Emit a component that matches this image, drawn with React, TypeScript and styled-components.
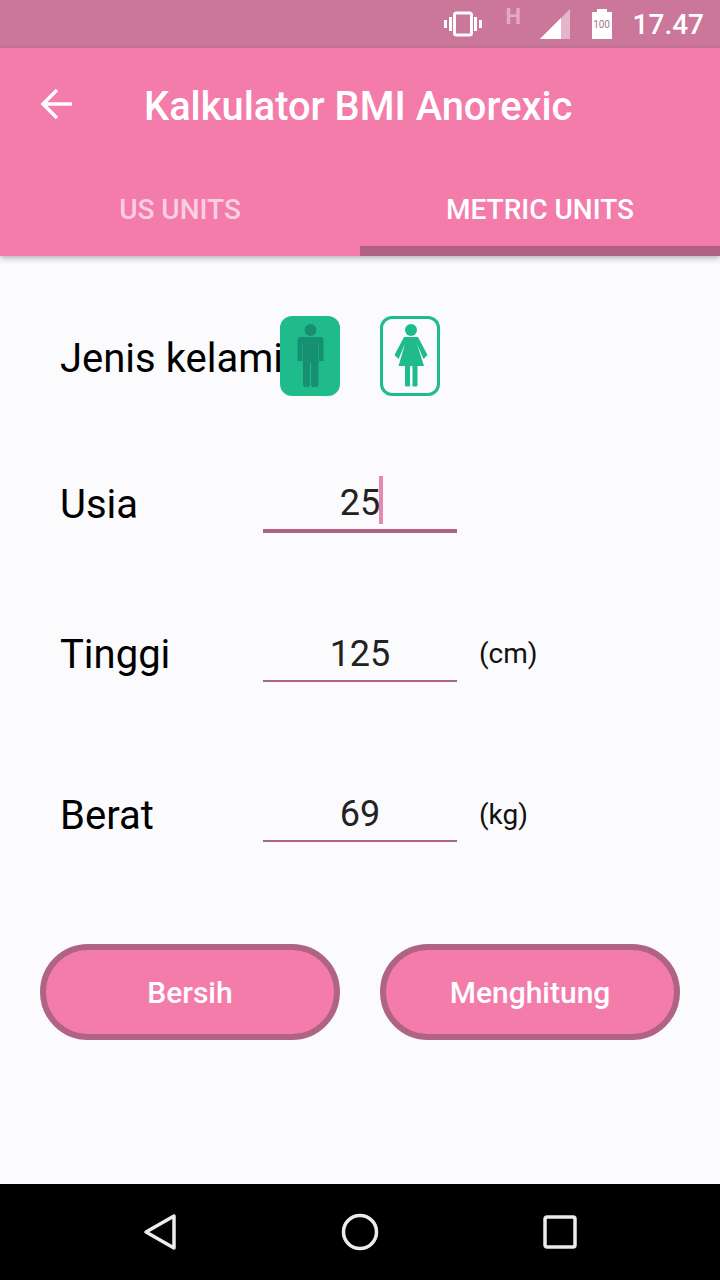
import styled, { createGlobalStyle } from 'styled-components';

const GlobalStyle = createGlobalStyle`
  html, body {
    margin: 0;
    padding: 0;
    background: #fbfafd;
  }
`;

const MaleIcon = () => (
  <svg width='60' height='80' viewBox='0 0 60 80'>
    <circle cx='30.500' cy='14' r='6' fill='#179071' />
    <path
      d='M20 21 H41 Q43.500 21 43.500 24 V45 H39 V28 H38.500 V69 Q38.500 71 36.500 71 H33 Q31 71 31 69 V47 H30 V69 Q30 71 28 71 H25 Q23 71 23 69 V28 H22.500 V45 H17.500 V24 Q17.500 21 20 21 Z'
      fill='#179071'
    />
  </svg>
);

const FemaleIcon = () => (
  <svg width='60' height='80' viewBox='0 0 60 80'>
    <circle cx='31' cy='14' r='6' fill='#1fbb8b' />
    <path
      d='M24 21 H38 L47.500 39 L43.500 43 L37 28 L44 50 H37.500 V69 Q37.500 70.500 36 70.500 H33.500 Q32.500 70.500 32.500 69 V50 H30 V69 Q30 70.500 28.500 70.500 H26.500 Q25 70.500 25 69 V50 H18.500 L25 28 L18.500 43 L14.500 39 Z'
      fill='#1fbb8b'
    />
  </svg>
);

export default function App() {
  return (
    <Screen>
      <GlobalStyle />
      <StatusBar>
        <svg width='38' height='26' viewBox='0 0 38 26'>
          <rect x='10.500' y='2' width='17' height='22' rx='2' fill='none' stroke='#fff' strokeWidth='3' />
          <rect x='0' y='9' width='3' height='8' fill='#fff' />
          <rect x='5' y='6' width='3' height='14' fill='#fff' />
          <rect x='30' y='6' width='3' height='14' fill='#fff' />
          <rect x='35' y='9' width='3' height='8' fill='#fff' />
        </svg>
        <NetworkMark>H</NetworkMark>
        <svg width='30' height='30' viewBox='0 0 30 30'>
          <path d='M0 30 L30 0 V30 Z' fill='#e6b5c9' />
          <path d='M0 30 L21 9 V30 Z' fill='#fff' />
        </svg>
        <Battery>
          <BatteryCap />
          <BatteryBody>100</BatteryBody>
        </Battery>
        <Clock>17.47</Clock>
      </StatusBar>

      <Header>
        <Toolbar>
          <svg width='34' height='34' viewBox='0 0 34 34'>
            <path d='M32 17 H4 M17 3 L3 17 L17 31' fill='none' stroke='#fff' strokeWidth='3.500' />
          </svg>
          <Title>Kalkulator BMI Anorexic</Title>
        </Toolbar>
        <Tabs>
          <Tab>US UNITS</Tab>
          <Tab $active>METRIC UNITS</Tab>
        </Tabs>
      </Header>

      <Content>
        <GenderRow>
          <Label>Jenis kelami</Label>
          <GenderButton $selected>
            <MaleIcon />
          </GenderButton>
          <GenderButton>
            <FemaleIcon />
          </GenderButton>
        </GenderRow>

        <FieldRow $top={57} $drop={2}>
          <FieldLabel>Usia</FieldLabel>
          <Field $focused>
            <FieldValue>
              25
              <Caret />
            </FieldValue>
          </Field>
        </FieldRow>

        <FieldRow $top={49} $drop={4}>
          <FieldLabel>Tinggi</FieldLabel>
          <Field>
            <FieldValue>125</FieldValue>
          </Field>
          <Unit>(cm)</Unit>
        </FieldRow>

        <FieldRow $top={60} $drop={6}>
          <FieldLabel>Berat</FieldLabel>
          <Field>
            <FieldValue>69</FieldValue>
          </Field>
          <Unit>(kg)</Unit>
        </FieldRow>

        <Buttons>
          <PillButton>Bersih</PillButton>
          <PillButton>Menghitung</PillButton>
        </Buttons>
      </Content>

      <NavBar>
        <svg width='34' height='38' viewBox='0 0 34 38'>
          <path d='M31 3 V35 L3 19 Z' fill='none' stroke='#ececec' strokeWidth='3.500' strokeLinejoin='round' />
        </svg>
        <svg width='38' height='38' viewBox='0 0 38 38'>
          <circle cx='19' cy='19' r='16.500' fill='none' stroke='#ececec' strokeWidth='3.500' />
        </svg>
        <svg width='34' height='34' viewBox='0 0 34 34'>
          <rect x='2' y='2' width='30' height='30' rx='2' fill='none' stroke='#ececec' strokeWidth='3.500' />
        </svg>
      </NavBar>
    </Screen>
  );
}

const Screen = styled.div`
  width: 720px;
  height: 1280px;
  display: flex;
  flex-direction: column;
  overflow: hidden;
  background: #fbfafd;
  font-family: Roboto, sans-serif;
`;

const StatusBar = styled.div`
  height: 48px;
  flex-shrink: 0;
  padding-right: 16px;
  box-sizing: border-box;
  display: flex;
  align-items: center;
  justify-content: flex-end;
  background: #cb7799;
`;

const NetworkMark = styled.div`
  width: 18px;
  margin: -16px 16px 0 24px;
  color: #e6a9c2;
  font-size: 22px;
  font-weight: 700;
`;

const Battery = styled.div`
  width: 20px;
  height: 30px;
  margin: 0 21px 0 22px;
  display: flex;
  flex-direction: column;
  align-items: center;
`;

const BatteryCap = styled.div`
  width: 10px;
  height: 3px;
  background: #fff;
`;

const BatteryBody = styled.div`
  width: 20px;
  height: 27px;
  background: #fff;
  color: #a8768c;
  font-size: 10px;
  line-height: 25px;
  text-align: center;
`;

const Clock = styled.div`
  color: #fff;
  font-size: 28px;
  font-weight: 500;
`;

const Header = styled.header`
  height: 208px;
  flex-shrink: 0;
  display: flex;
  flex-direction: column;
  background: #f37cab;
  box-shadow: 0 2px 6px rgba(0, 0, 0, 0.3);
  position: relative;
`;

const Toolbar = styled.div`
  height: 112px;
  padding-left: 40px;
  display: flex;
  align-items: center;
`;

const Title = styled.h1`
  margin: 0 0 0 70px;
  padding-top: 4px;
  color: #fff;
  font-size: 39.8px;
  font-weight: 500;
  white-space: nowrap;
`;

const Tabs = styled.div`
  flex: 1;
  display: flex;
`;

const Tab = styled.div<{ $active?: boolean }>`
  flex: 1;
  height: 96px;
  box-sizing: border-box;
  display: flex;
  align-items: flex-start;
  justify-content: center;
  border-bottom: 10px solid ${(p) => (p.$active ? '#b06080' : 'transparent')};
  color: ${(p) => (p.$active ? '#fff' : '#fbcfe0')};
  font-size: 28px;
  font-weight: 500;
  line-height: 100px;
`;

const Content = styled.main`
  flex: 1;
  display: flex;
  flex-direction: column;
  padding-top: 60px;
`;

const GenderRow = styled.div`
  height: 80px;
  padding-left: 60px;
  display: flex;
  align-items: center;
  gap: 40px;
  color: #000;
`;

const Label = styled.div`
  width: 220px;
  margin-right: -40px;
  padding-top: 4px;
  white-space: nowrap;
  font-size: 40px;
`;

const GenderButton = styled.div<{ $selected?: boolean }>`
  width: 60px;
  height: 80px;
  box-sizing: border-box;
  display: flex;
  align-items: center;
  justify-content: center;
  border-radius: 12px;
  border: 3px solid #1fbb8b;
  background: ${(p) => (p.$selected ? '#1fbb8b' : 'transparent')};
  flex-shrink: 0;
  & svg {
    flex-shrink: 0;
  }
`;

const FieldRow = styled.div<{ $top: number; $drop: number }>`
  height: 100px;
  margin-top: ${(p) => p.$top}px;
  padding-left: 60px;
  display: flex;
  align-items: center;
  --drop: ${(p) => p.$drop}px;
`;

const FieldLabel = styled.div`
  width: 203px;
  padding-top: var(--drop);
  color: #000;
  font-size: 40px;
`;

const Field = styled.div<{ $focused?: boolean }>`
  width: 194px;
  height: 60px;
  box-sizing: border-box;
  padding-top: ${(p) => (p.$focused ? '4px' : '6px')};
  display: flex;
  align-items: center;
  justify-content: center;
  border-bottom: ${(p) => (p.$focused ? '4px' : '2px')} solid #b06382;
`;

const FieldValue = styled.div`
  position: relative;
  color: #222;
  font-size: 36px;
`;

const Caret = styled.span`
  position: absolute;
  left: calc(100% - 1px);
  top: -6px;
  width: 4px;
  height: 48px;
  background: #e888ae;
`;

const Unit = styled.div`
  margin-left: 22px;
  padding-top: calc(var(--drop) - 2px);
  color: #111;
  font-size: 28px;
`;

const Buttons = styled.div`
  margin-top: 82px;
  padding: 0 40px;
  display: flex;
  gap: 40px;
`;

const PillButton = styled.button`
  flex: 1;
  height: 96px;
  box-sizing: border-box;
  border: 6px solid #b06382;
  border-radius: 48px;
  background: #f37cab;
  color: #fff;
  font-family: Roboto, sans-serif;
  font-size: 30px;
  font-weight: 500;
`;

const NavBar = styled.nav`
  height: 96px;
  flex-shrink: 0;
  padding: 0 143px;
  box-sizing: border-box;
  display: flex;
  align-items: center;
  justify-content: space-between;
  background: #000;
`;
